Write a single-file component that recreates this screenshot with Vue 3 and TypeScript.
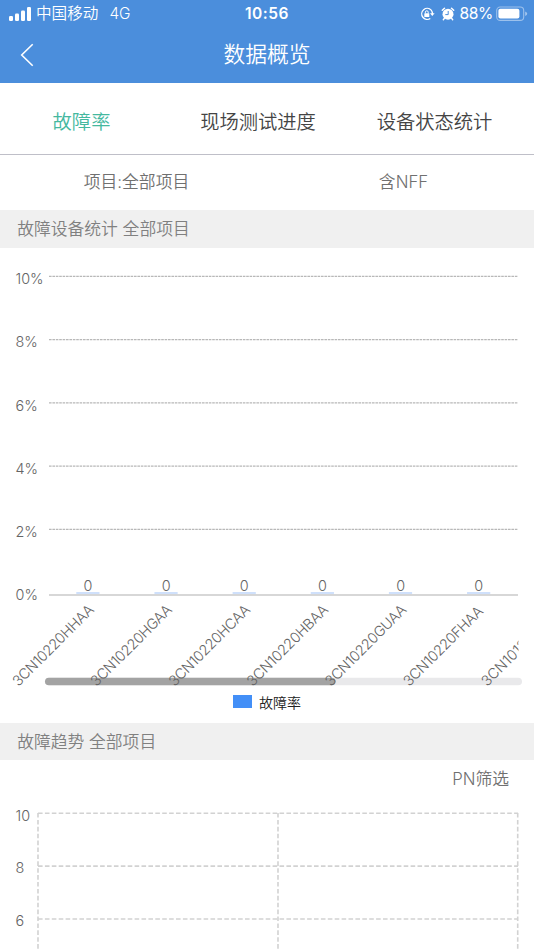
<script setup lang="ts">
interface Category {
  name: string
  x: number
  value: number
  length: number
}

const tabs: string[] = ['故障率', '现场测试进度', '设备状态统计']
const activeTab = 0

const rateTicks = [10, 8, 6, 4, 2, 0].map((value, i) => ({
  label: `${value}%`,
  y: 28.3 + i * 63.25,
  value,
}))

const names = ['HHAA', 'HGAA', 'HCAA', 'HBAA', 'GUAA', 'FHAA']
const categories: Category[] = names.map((suffix, i) => ({
  name: `3CN10220${suffix}`,
  x: 88 + i * 78.15,
  value: 0,
  length: suffix === 'FHAA' ? 106 : 108,
}))

const trendTicks = [10, 8, 6].map((value, i) => ({ value, y: 17.2 + i * 52.9 }))
const trendColumns = [38, 278, 517.7]
</script>

<template>
  <div class="screen">
    <header class="header">
      <div class="status">
        <div class="status-left">
          <svg class="signal" width="23" height="14" viewBox="0 0 23 14">
            <rect x="0" y="9" width="4" height="5" rx="1.2" />
            <rect x="6" y="6.5" width="4" height="7.5" rx="1.2" />
            <rect x="12" y="3.5" width="4" height="10.5" rx="1.2" />
            <rect x="18" y="0" width="4" height="14" rx="1.2" />
          </svg>
          <span class="carrier">中国移动</span>
          <span class="network">4G</span>
        </div>
        <span class="time">10:56</span>
        <div class="status-right">
          <svg width="15" height="14" viewBox="0 0 15 14">
            <path d="M11.2 3.1A5.5 5.5 0 1 0 10.3 11.5M11.2 3.1A5.5 5.5 0 0 1 12.4 7" fill="none" stroke="#fff" stroke-width="1.3" />
            <path d="M10 6.2h4.6l-2.3 2.9z" fill="#fff" />
            <rect x="4.3" y="6.2" width="5" height="3.8" rx=".5" fill="#fff" />
            <path d="M5.4 6.4V5.2a1.4 1.4 0 0 1 2.8 0v1.2" fill="none" stroke="#fff" />
          </svg>
          <svg class="alarm" width="14" height="14" viewBox="0 0 14 14">
            <circle cx="7" cy="7.2" r="5.5" fill="#fff" />
            <path d="M1.3 3.3 3.5 1.2M10.5 1.2l2.2 2.1" stroke="#fff" stroke-width="1.5" stroke-linecap="round" />
            <path d="M3.4 11.3l-1.1 1.4M10.6 11.3l1.1 1.4" stroke="#fff" stroke-width="1.4" stroke-linecap="round" />
            <path d="M7.2 4v3.6H4.3" fill="none" stroke="#4b8edc" />
          </svg>
          <span class="percent">88%</span>
          <svg class="battery" width="32" height="16" viewBox="0 0 32 16">
            <rect x=".7" y="1" width="27" height="13.4" rx="3.5" fill="none" stroke="#fff" stroke-opacity=".45" stroke-width="1.1" />
            <rect x="2.4" y="2.8" width="21" height="9.8" rx="2" fill="#fff" />
            <path d="M29.2 5.5q2 .7 2 2.2t-2 2.2z" fill="#fff" fill-opacity=".5" />
          </svg>
        </div>
      </div>
      <div class="navbar">
        <svg class="back" width="14" height="24" viewBox="0 0 14 24">
          <path d="M12.7 1.3 1.7 12l11 10.7" fill="none" stroke="#fff" stroke-width="1.6" />
        </svg>
        <h1>数据概览</h1>
      </div>
    </header>

    <nav class="tabs">
      <span v-for="(tab, i) in tabs" :key="tab" :class="{ active: i === activeTab }">{{ tab }}</span>
    </nav>

    <div class="filters">
      <span>项目:全部项目</span>
      <span>含NFF</span>
    </div>

    <h2 class="section">故障设备统计 全部项目</h2>
    <section class="rate">
      <svg class="chart" width="534" height="443" viewBox="0 0 534 443">
        <defs>
          <clipPath id="plot"><rect x="0" y="0" width="518.5" height="443" /></clipPath>
        </defs>
        <g v-for="tick in rateTicks" :key="tick.value">
          <text class="label" x="15.5" :y="tick.y + 7.7">{{ tick.label }}</text>
          <line v-if="tick.value" class="rate-line" x1="49" x2="518" :y1="tick.y" :y2="tick.y" />
        </g>
        <rect class="track" x="45" y="429.7" width="477" height="7.6" rx="3.8" />
        <rect class="thumb" x="45" y="429.7" width="290.5" height="7.6" rx="3.8" />
        <g v-for="item in categories" :key="item.name">
          <rect class="bar" :x="item.x - 11.7" y="344" width="23.2" height="2.2" />
          <text class="label" :x="item.x" y="343" text-anchor="middle">{{ item.value }}</text>
          <text class="label" :textLength="item.length" :transform="`translate(${item.x - 69.6} 439) rotate(-45)`">{{ item.name }}</text>
        </g>
        <g clip-path="url(#plot)">
          <text class="label" transform="translate(487.2 439) rotate(-45)">3CN1013</text>
        </g>
        <line class="axis" x1="49" x2="518" y1="347" y2="347" />
      </svg>
      <div class="legend"><i></i><span>故障率</span></div>
    </section>

    <h2 class="section">故障趋势 全部项目</h2>
    <section class="trend">
      <div class="pn">PN筛选</div>
      <svg class="chart" width="534" height="155" viewBox="0 0 534 155">
        <g v-for="tick in trendTicks" :key="tick.value">
          <text class="label" x="15.5" :y="tick.y + 7.3">{{ tick.value }}</text>
          <line class="trend-line" x1="38" x2="518" :y1="tick.y" :y2="tick.y" />
        </g>
        <line v-for="x in trendColumns" :key="x" class="trend-line" :x1="x" :x2="x" y1="17" y2="155" />
      </svg>
    </section>
  </div>
</template>

<style>
body {
  margin: 0;
  overflow: hidden;
}
</style>

<style scoped>
.screen {
  width: 534px;
  height: 950px;
  overflow: hidden;
  background: #fff;
  color: #707070;
  font-family: Inter, "Noto Sans CJK SC", sans-serif;
  font-weight: 350;
}
.header {
  height: 82.6px;
  background: #4b8edc;
  color: #fff;
}
.status {
  display: grid;
  grid-template-columns: 1fr auto 1fr;
  align-items: center;
  height: 27px;
  padding: 0 7px 0 9px;
  font-size: 15.6px;
  line-height: 27px;
}
.status-left,
.status-right {
  display: flex;
  align-items: center;
}
.status-right {
  justify-content: flex-end;
}
.signal {
  fill: #fff;
  margin-right: 4px;
}
.network {
  margin-left: 11px;
  font-size: 15.4px;
}
.percent {
  font-size: 15.6px;
  letter-spacing: -0.4px;
  font-weight: 400;
}
.time {
  margin-right: 2px;
  font-weight: 600;
  font-size: 15.5px;
  letter-spacing: 0.5px;
}
.alarm {
  margin: 0 5px 0 6px;
}
.battery {
  margin-left: 3px;
  margin-right: -1px;
}
.navbar {
  display: grid;
  grid-template-columns: 50px 1fr 50px;
  align-items: center;
  height: 56px;
}
.back {
  margin-left: 20px;
}
h1 {
  margin: 0;
  padding-bottom: 2px;
  font-size: 21.8px;
  line-height: 32px;
  font-weight: 350;
  text-align: center;
}
.tabs {
  display: grid;
  grid-template-columns: 163px 190px 163px;
  align-items: center;
  box-sizing: border-box;
  height: 72.4px;
  padding-top: 6px;
  border-bottom: 1px solid #bfbfc8;
  color: #444;
  font-size: 19.3px;
  text-align: center;
}
.active {
  color: #45b89f;
}
.filters {
  display: grid;
  grid-template-columns: 273px 261px;
  height: 55.5px;
  line-height: 54px;
  font-size: 16.8px;
  text-align: center;
}
.section {
  margin: 0;
  height: 37.2px;
  padding-left: 17.2px;
  background: #f0f0f0;
  color: #808080;
  font-size: 16.8px;
  font-weight: 350;
  line-height: 39.6px;
}
.rate {
  height: 475px;
}
.chart {
  display: block;
}
.label {
  fill: #646464;
  font-size: 14.4px;
}
.rate-line {
  stroke: #b8b8b8;
  stroke-width: 1.2;
  stroke-dasharray: 2.6 0.8;
}
.axis {
  stroke: #cacaca;
  stroke-width: 1.6;
}
.bar {
  fill: #cfe0fb;
}
.track {
  fill: #e9e9eb;
}
.thumb {
  fill: #a3a3a3;
}
.legend {
  display: flex;
  align-items: center;
  justify-content: center;
  gap: 7px;
  height: 22px;
  color: #222;
  font-size: 14px;
}
.legend i {
  width: 19px;
  height: 13px;
  background: #438ff7;
}
.trend {
  height: 191px;
}
.pn {
  height: 36px;
  padding-right: 25px;
  font-size: 16.8px;
  line-height: 38px;
  text-align: right;
}
.trend-line {
  stroke: #d2d2d2;
  stroke-width: 1.6;
  stroke-dasharray: 4.6 2.3;
}
</style>
